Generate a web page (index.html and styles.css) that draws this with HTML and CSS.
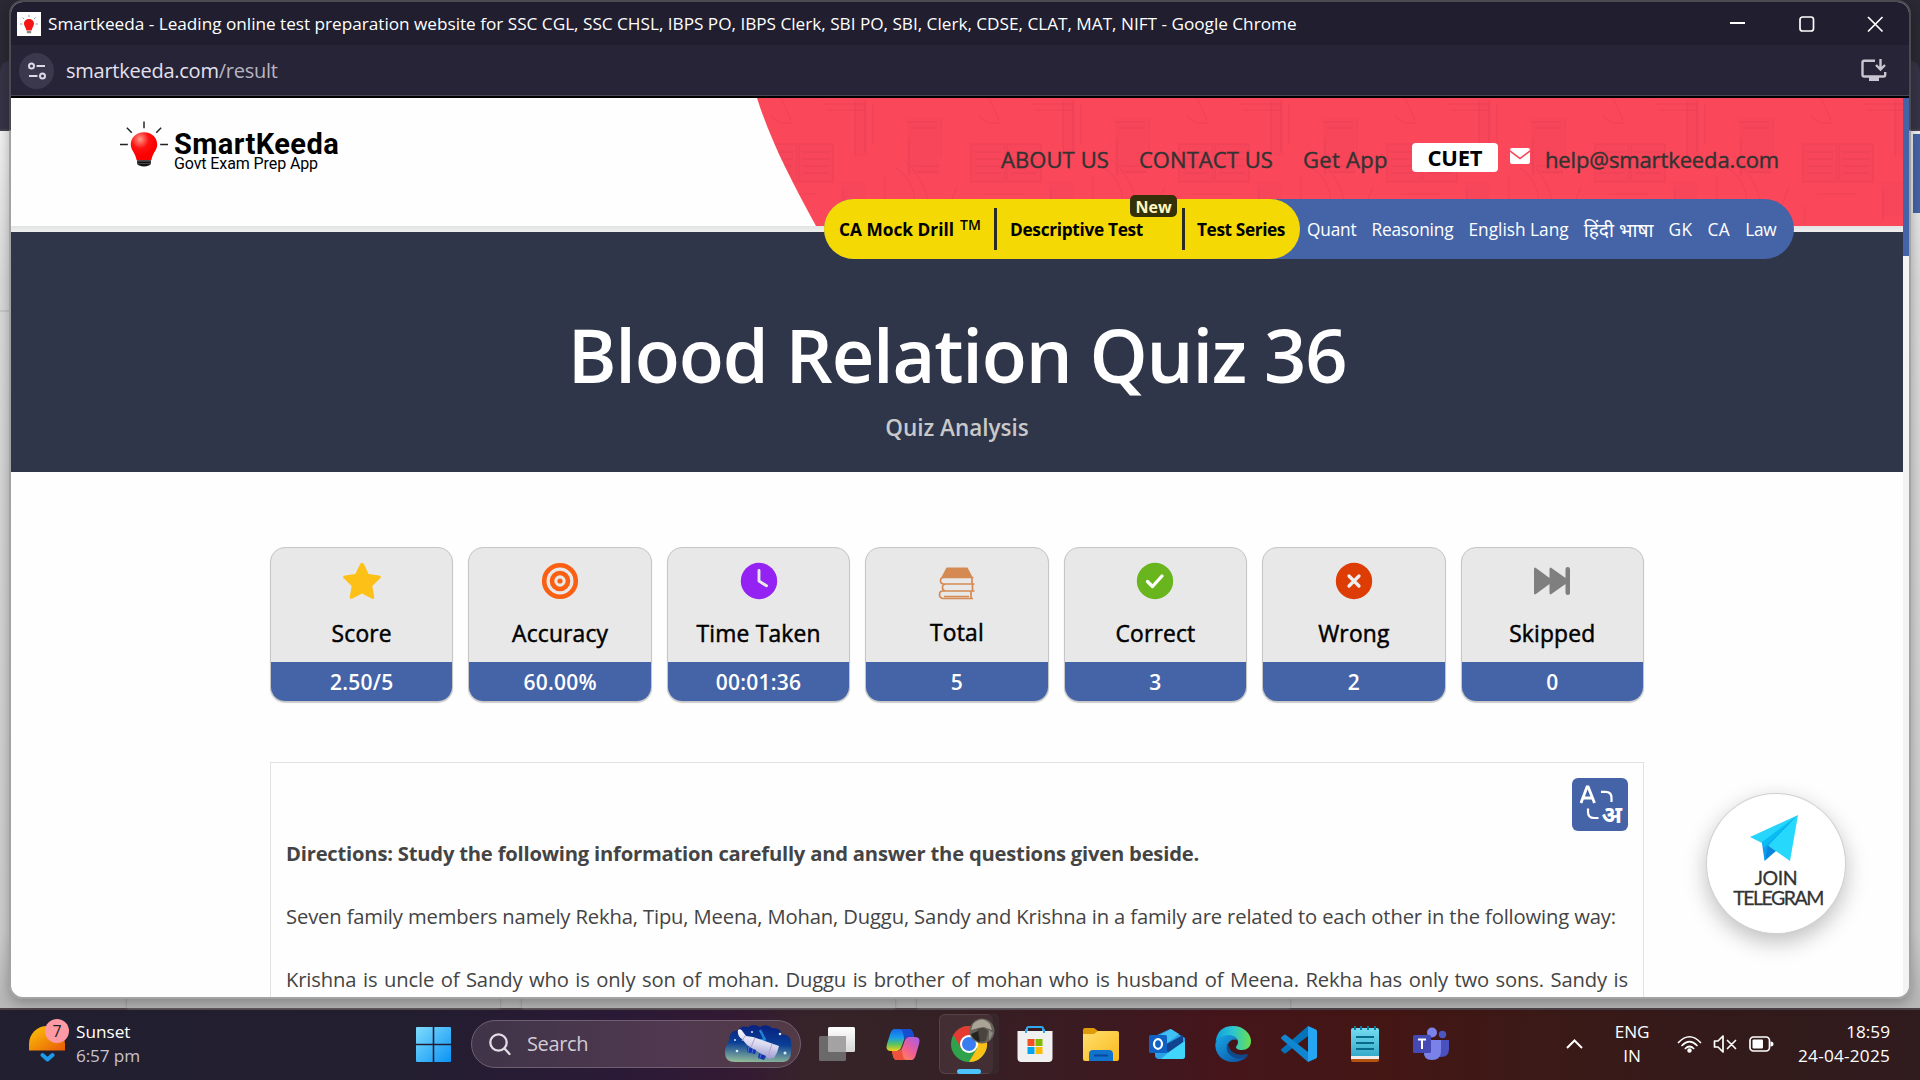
FILE: index.html
```html
<!DOCTYPE html>
<html lang="en">
<head>
<meta charset="utf-8">
<title>Smartkeeda</title>
<link rel="stylesheet" href="styles.css">
</head>
<body>
<div class="desktop">
  <div class="back-window">
    <div class="back-tabs"></div>
    <div class="back-toolbar"></div>
    <div class="back-page">
      <i class="back-rule"></i>
      <i class="back-thumb"></i>
      <div class="back-cards"><i></i><i></i><i></i></div>
    </div>
  </div>

  <main class="window">
    <div class="window-body">
      <div class="titlebar">
        <svg class="favicon" viewBox="0 0 24 24"><rect width="24" height="24" fill="#fff"/><path d="M12 7c3.200 0 5 2.200 5 4.700 0 2.300-1.800 3.600-2.500 6.800h-5C8.800 15.300 7 14 7 11.700 7 9.200 8.800 7 12 7z" fill="#f51414"/><path d="M9.800 19h4.400v2.200H9.800z" fill="#888"/><path d="M12 3v2M5.500 5.500L7 7M18.500 5.500L17 7M3 12h2.500M18.500 12H21" stroke="#999" stroke-width="1"/></svg>
        <span class="window-title">Smartkeeda - Leading online test preparation website for SSC CGL, SSC CHSL, IBPS PO, IBPS Clerk, SBI PO, SBI, Clerk, CDSE, CLAT, MAT, NIFT - Google Chrome</span>
        <svg class="controls" viewBox="0 0 154 20"><g fill="none" stroke="#fff"><path d="M0 9h15" stroke-width="2"/><rect x="70" y="3" width="13.500" height="14" rx="2.500" stroke-width="1.700"/><path d="M138 3l14.500 14.500M152.500 3L138 17.500" stroke-width="1.700"/></g></svg>
      </div>
      <div class="toolbar">
        <span class="site-info"><svg viewBox="0 0 20 20"><g fill="none" stroke="#dcd8e6" stroke-width="2"><circle cx="4.500" cy="5" r="2.500"/><path d="M9.500 5H18M2 15h8.500"/><circle cx="15.500" cy="15" r="2.500"/></g></svg></span>
        <span class="url"><span class="host">smartkeeda.com</span><span class="path">/result</span></span>
        <svg class="install" viewBox="0 0 26 23"><g fill="none" stroke="#c9c6d2" stroke-width="2.400"><path d="M14 1.700H3.200Q1.500 1.700 1.500 3.500v12.300q0 1.700 1.700 1.700h19.300q1.700 0 1.700-1.700V13"/><path d="M19.500 0v10M15 6l4.500 4.600L24 6"/></g><path d="M8 18h10v4H8z" fill="#c9c6d2"/></svg>
      </div>
      <div class="view">
        <div class="page">
          <header class="header">
            <svg class="banner" viewBox="0 0 1146 128" preserveAspectRatio="none">
              <defs>
                <pattern id="books" width="208" height="128" patternUnits="userSpaceOnUse">
                  <g fill="none" stroke="#e23a50" stroke-opacity=".32" stroke-width="1.500">
                    <path d="M6 46h34v38H6zM42 46h34v38H42zM10 54h26M10 61h26M10 68h26M10 75h26M46 54h26M46 61h26M46 68h26M46 75h26"/>
                    <path d="M98 2v56M108 2v52M116 6v40M128 78v30M138 70q16 8 20 32M146 62q18 12 26 44"/>
                    <path d="M66 6h42M70 12h38M150 24h30M152 30h28M156 68h26M160 74h22M152 40v38M184 20v40M20 96h40M8 108v18M86 92v30M200 88l-12 32"/>
                    <circle cx="118" cy="112" r="9"/><path d="M24 0l10 22M14 18q8 10 22 6"/>
                  </g>
                  <g fill="#e23a50" fill-opacity=".12"><path d="M6 46h34v38H6zM42 46h34v38H42zM150 20h32v56h-32zM98 2h12v56H98zM84 84h24v34H84z"/></g>
                </pattern>
              </defs>
              <path d="M0 0H1146V128H59C35 84 14 44 0 0z" fill="#fb475a"/>
              <path d="M0 0H1146V128H59C35 84 14 44 0 0z" fill="url(#books)"/>
            </svg>
            <div class="logo">
              <svg viewBox="0 0 50 47"><defs><radialGradient id="bulb" cx=".35" cy=".25" r=".6"><stop offset="0" stop-color="#ff9a8a"/><stop offset=".55" stop-color="#fe1212"/><stop offset="1" stop-color="#fb0000"/></radialGradient></defs><path d="M24.500 11c8.500 0 13.500 6 13.500 12.500 0 6-4.500 8-6 16H17c-1.500-8-6-10-6-16C11 17 16 11 24.500 11z" fill="url(#bulb)"/><path d="M17.500 39.500h14v4q-2 2.500-7 2.500t-7-2.500z" fill="#111"/><path d="M17.500 40.500h14M17.500 43h14" stroke="#777" stroke-width=".6"/><path d="M24.500 0v7M7 6.500l5 5M42 6.500l-5 5M0 23.500h8M41 23.500h8" stroke="#222" stroke-width="1.500"/></svg>
              <div class="logo-text"><b>SmartKeeda</b><span>Govt Exam Prep App</span></div>
            </div>
            <nav class="topnav">
              <a class="t-about">ABOUT US</a><a class="t-contact">CONTACT US</a><a class="t-app">Get App</a>
              <a class="cuet"><span>CUET</span></a>
              <svg class="mail" viewBox="0 0 20 16"><path d="M2 0h16q2 0 2 2L10 9.500 0 2Q0 0 2 0zM0 4l10 7.500L20 4v10q0 2-2 2H2q-2 0-2-2z" fill="#fff"/></svg>
              <a class="t-help">help@smartkeeda.com</a>
            </nav>
            <nav class="subjects">
              <div class="featured">
                <a class="f1"><span>CA Mock Drill</span> <sup>TM</sup></a>
                <a class="f2"><span>Descriptive Test</span><em>New</em></a>
                <a class="f3"><span>Test Series</span></a>
              </div>
              <div class="topics">
              <a class="s1">Quant</a><a class="s2">Reasoning</a><a class="s3">English Lang</a><a class="s4">हिंदी भाषा</a><a class="s5">GK</a><a class="s6">CA</a><a class="s7">Law</a>
              </div>
            </nav>
          </header>

          <section class="hero">
            <h1><span>Blood Relation Quiz 36</span></h1>
            <p><span>Quiz Analysis</span></p>
          </section>

          <section class="stats">
            <div class="stat"><svg viewBox="0 0 38 38"><path d="M19 .8q1.300 0 2 1.500l4.600 9.800 10.500 1.500q3 .6.900 2.900l-7.700 7.600 1.900 10.700q.3 3-2.500 1.800L19 31.500l-9.700 5.100q-2.800 1.200-2.500-1.800l1.900-10.700L1 16.500q-2.100-2.300.9-2.900l10.500-1.500L17 2.300Q17.700.8 19 .8z" fill="#fdc016"/></svg><h3><span>Score</span></h3><strong><span>2.50/5</span></strong></div>
            <div class="stat"><svg viewBox="0 0 38 38"><g fill="none" stroke="#fb5f12"><circle cx="19" cy="19" r="15.800" stroke-width="4.600"/><circle cx="19" cy="19" r="8" stroke-width="4.600"/></g><circle cx="19" cy="19" r="2.600" fill="#fb5f12"/></svg><h3><span>Accuracy</span></h3><strong><span>60.00%</span></strong></div>
            <div class="stat"><svg viewBox="0 0 38 38"><circle cx="19" cy="19" r="18.200" fill="#9322f3"/><path d="M19 8.500V19l7.500 4.800" fill="none" stroke="#e8e8e8" stroke-width="2.900" stroke-linecap="round" stroke-linejoin="round"/></svg><h3><span>Time Taken</span></h3><strong><span>00:01:36</span></strong></div>
            <div class="stat total"><svg viewBox="0 0 38 38"><path d="M8.500 5.500h21l5 9.500v1H3z" fill="#d58a54"/><g fill="none" stroke="#d58a54" stroke-width="1.700"><path d="M35.500 15.500H6q-3.500 0-3.500 3.200T6 22h30M34 15.500V22M36.500 22H8q-3.500 0-3.500 3.500T8 29h28.500M34.500 22v7M36 29H5q-3.500 0-3.500 3.500T5 36.500h30M33 29v7.500M6 34.500h25"/></g></svg><h3><span>Total</span></h3><strong><span>5</span></strong></div>
            <div class="stat"><svg viewBox="0 0 38 38"><circle cx="19" cy="19" r="18.200" fill="#69b51d"/><path d="M11.500 19.500l5 5L26 14" fill="none" stroke="#fff" stroke-width="3.300" stroke-linecap="round" stroke-linejoin="round"/></svg><h3><span>Correct</span></h3><strong><span>3</span></strong></div>
            <div class="stat"><svg viewBox="0 0 38 38"><circle cx="19" cy="19" r="18.200" fill="#de3c05"/><path d="M14 14l10 10M24 14L14 24" fill="none" stroke="#eee" stroke-width="3.300" stroke-linecap="round"/></svg><h3><span>Wrong</span></h3><strong><span>2</span></strong></div>
            <div class="stat"><svg viewBox="0 0 38 38"><path d="M1 7.500q0-3 2.300-1.300L16.500 16V7.500q0-3 2.300-1.300L32.500 16V7q0-2 2.300-2T37 7v24q0 2-2.200 2t-2.300-2v-9L18.800 31.800q-2.300 1.700-2.300-1.300V22L3.300 31.800Q1 33.500 1 30.500z" fill="#7f7f7f"/></svg><h3><span>Skipped</span></h3><strong><span>0</span></strong></div>
          </section>

          <section class="question">
            <button class="translate"><svg viewBox="0 0 56 53"><g fill="none" stroke="#fff" stroke-width="2.800"><path d="M9 25L15 9h1.200L22.500 25M11 20h9.500"/><path d="M29 13.800h4.500q6 0 6 6V24M16 30.500V34q0 6 6 6h4.500" stroke-width="2.200"/></g><text x="29.500" y="45" class="glyph">अ</text></svg></button>
            <p class="q1"><b>Directions: Study the following information carefully and answer the questions given beside.</b></p>
            <p class="q2"><span>Seven family members namely Rekha, Tipu, Meena, Mohan, Duggu, Sandy and Krishna in a family are related to each other in the following way:</span></p>
            <p class="q3">Krishna is uncle of Sandy who is only son of mohan. Duggu is brother of mohan who is husband of Meena. Rekha has only two sons. Sandy is</p>
          </section>

          <a class="telegram">
            <svg viewBox="0 0 48 46"><path d="M48 0L0 22l12 6z" fill="#26d5fb"/><path d="M48 0L12 28l2.500 18L19 31z" fill="#0a9df0"/><path d="M48 0L18 30.500 40 46z" fill="#26d9fc"/><path d="M18 30.500L14.500 46 26 36z" fill="#0587e0"/><path d="M48 0L12 27l2 6z" fill="#08bdf3"/></svg>
            <span>JOIN</span><span class="tg">TELEGRAM</span>
          </a>
        </div>
        <div class="scrollbar"><i></i></div>
      </div>
    </div>
  </main>

  <footer class="taskbar">
    <div class="weather">
      <div class="sun"><svg viewBox="0 0 36 36"><defs><linearGradient id="sun" x1="0" y1="0" x2="1" y2="1"><stop offset="0" stop-color="#fdc70a"/><stop offset="1" stop-color="#e85a05"/></linearGradient></defs><path d="M0 24.500V18a18 18 0 0 1 36 0v6.500z" fill="url(#sun)"/><path d="M13.500 29l5 4.500 5-4.500" fill="none" stroke="#1c9bea" stroke-width="4" stroke-linecap="round" stroke-linejoin="round"/></svg><b class="badge">7</b></div>
      <div class="wx"><span>Sunset</span><span class="dim">6:57 pm</span></div>
    </div>
    <svg class="start" viewBox="0 0 35 35"><defs><linearGradient id="win" x1="0" y1="0" x2="1" y2="1"><stop offset="0" stop-color="#7fdcfd"/><stop offset="1" stop-color="#0a93f5"/></linearGradient></defs><path d="M1 0h15.700v16.700H0V1q0-1 1-1zM18.300 0H34q1 0 1 1v15.700H18.300zM0 18.300h16.700V35H1q-1 0-1-1zM18.300 18.300H35V34q0 1-1 1H18.300z" fill="url(#win)"/></svg>
    <div class="search">
      <svg class="lens" viewBox="0 0 22 23"><g fill="none" stroke="#e2dde5" stroke-width="2.300" stroke-linecap="round"><circle cx="9.500" cy="9.500" r="8.200"/><path d="M15.500 15.500l5 5.500"/></g></svg>
      <span>Search</span>
      <svg class="art" viewBox="0 0 67 38"><defs><linearGradient id="sky" x1=".5" y1="0" x2=".4" y2="1"><stop offset="0" stop-color="#082080"/><stop offset=".5" stop-color="#0a3f96"/><stop offset="1" stop-color="#8fb99a"/></linearGradient><linearGradient id="tube" x1=".6" y1="0" x2=".4" y2="1"><stop offset="0" stop-color="#fff"/><stop offset=".5" stop-color="#d9d8ef"/><stop offset="1" stop-color="#8f90cc"/></linearGradient></defs><path d="M4 15q0-9 9-10Q16 0 23 2q6-4 12 0 7-4 12 1 8-1 10 6 9 1 9 8 1 4 0 7 1 13-8 13H10Q0 37 0 28q0-5 2-8z" fill="url(#sky)"/><path d="M35 5l5 10M33 16l8-2" stroke="#1b83d8" stroke-width="2.500"/><path d="M13 5q3-2 5 2l3 4 7 1 26 9q-1 6-5 12l-5 1-22-14-5-6q-5-3-4-9z" fill="url(#tube)"/><path d="M20 11l-3 5M47 19l-4 12M30 13l-4 9" stroke="#b59fcf"/><path d="M22 22l9 3-1 4-8-2zM34 28l7 3-2 4-6-2z" fill="#1433b0"/><path d="M24 22l-1 5M28 24l-1 4M36 29l-1 4" stroke="#6d8fe0" stroke-width=".7"/><g fill="#d5ecff"><circle cx="10" cy="15" r="1"/><circle cx="55" cy="9" r="1.300"/><circle cx="60" cy="28" r="1.500"/><circle cx="12" cy="26" r="1.300"/><circle cx="27" cy="7" r="1"/></g></svg>
    </div>
    <div class="apps">
      <svg viewBox="0 0 36 36"><defs><linearGradient id="tv" x1="0" y1="0" x2="0" y2="1"><stop offset="0" stop-color="#fff"/><stop offset="1" stop-color="#d6d6d6"/></linearGradient></defs><rect x="9" y="1" width="27" height="25" rx="1.500" fill="url(#tv)"/><rect x="0" y="10" width="27" height="25" rx="1.500" fill="#6b6969"/><path d="M9 10h18v16H10.500Q9 26 9 24.500z" fill="#a4a2a2"/></svg>
      <svg viewBox="0 0 36 36"><defs><linearGradient id="cpa" x1="0" y1="0" x2="0" y2="1"><stop offset="0" stop-color="#1668ea"/><stop offset=".4" stop-color="#1a9ee8"/><stop offset=".7" stop-color="#5cc45c"/><stop offset="1" stop-color="#f8cf1c"/></linearGradient><linearGradient id="cpb" x1="1" y1="0" x2="0" y2="1"><stop offset="0" stop-color="#a45bf0"/><stop offset=".5" stop-color="#f2608e"/><stop offset="1" stop-color="#fb9a3a"/></linearGradient></defs><path d="M9.500 3H24q3 0 4 4l1 4h-6q-3 0-4 3l-3 8q-1.500 3-4 3H5.500Q0 25 2 18L5.500 7Q7 3 9.500 3z" fill="url(#cpa)"/><path d="M14 3h10q3 0 4 4l1 4h-6q-2.500 0-3.500 2.500L18 7q-1-4-4-4z" fill="#174bd0"/><path d="M26.500 34H12q-3 0-4-4l-1-5h6q3 0 4-3l3-8q1.500-3 4-3h6.500q5.500 0 3.500 7l-3.500 12q-1.500 4-4 4z" fill="url(#cpb)"/><path d="M22 34H12q-3 0-4-4l-1-5h6q2.500 0 3.500-2.500L18 30q1 4 4 4z" fill="#f0513e"/></svg>
      <span class="active"><svg viewBox="0 0 36 36"><circle cx="18" cy="18" r="18" fill="#31a24c"/><path d="M18 18L2.400 9A18 18 0 0 1 33.600 9z" fill="#e53a32"/><path d="M18 9h15.600A18 18 0 0 1 18 36l8-13.500z" fill="#fbc116"/><path d="M2.400 9l7.800 13.500L14 10 33.600 9H18z" fill="#e53a32"/><circle cx="18" cy="18" r="9" fill="#fff"/><circle cx="18" cy="18" r="7" fill="#3a7df0"/></svg><svg class="avatar" viewBox="0 0 26 26"><circle cx="13" cy="13" r="12.500" fill="#67635a"/><path d="M4 6q9-9 17 0l2 6-8-3-6 1-7 2z" fill="#aaa497"/><path d="M8 12q6-5 11 1l-2 9q-5 4-8-1z" fill="#4a443e"/><path d="M2 16l7-3 2 11q-7-2-9-8z" fill="#24241f"/><path d="M20 12l4 3-4 8z" fill="#8b8e85"/></svg></span>
      <svg viewBox="0 0 36 36"><path d="M10 9V2.500Q10 1 11.500 1h13Q26 1 26 2.500V9" fill="none" stroke="#31a8ec" stroke-width="2"/><path d="M.5 5h35v27q0 4-4 4h-27q-4 0-4-4z" fill="#f1f0f0"/><path d="M9 3v4M27 3v4" stroke="#31a8ec" stroke-width="2"/><path d="M10.500 13H17.500V20H10.500z" fill="#f25022"/><path d="M18.500 13h7v7h-7z" fill="#7fba00"/><path d="M10.500 21h7v7h-7z" fill="#00a4ef"/><path d="M18.500 21h7v7h-7z" fill="#ffb900"/></svg>
      <svg viewBox="0 0 36 36"><defs><linearGradient id="fold" x1="0" y1="0" x2="1" y2="1"><stop offset="0" stop-color="#ffdf6e"/><stop offset="1" stop-color="#fbb91d"/></linearGradient></defs><path d="M0 4q0-2 2-2h9l4 3v6H0z" fill="#df9b08"/><path d="M0 8h11l4-3h19q2 0 2 2v26q0 2-2 2H2q-2 0-2-2z" fill="url(#fold)"/><path d="M6 35V28q0-4 4-4h16q4 0 4 4v7z" fill="#1273cf"/><path d="M11 29.500h14" stroke="#064b9a" stroke-width="2"/></svg>
      <svg viewBox="0 0 36 36"><path d="M6 10L21 3l15 9v18q0 3-3 3H10q-4 0-4-4z" fill="#2b9fe8"/><path d="M10 10L22 3l8 5-16 12z" fill="#41c1f3"/><path d="M34 9v7L19 27l-5-7z" fill="#12438f"/><path d="M36 15v15q0 3-3 3H12l8-7z" fill="#40d5fa"/><rect x="0" y="9" width="18" height="18" rx="1.500" fill="#0f62c4"/><ellipse cx="9" cy="18" rx="4" ry="4.800" fill="none" stroke="#fff" stroke-width="2.200"/></svg>
      <svg viewBox="0 0 36 36"><defs><linearGradient id="edge" x1="0" y1=".3" x2="1" y2=".3"><stop offset="0" stop-color="#0fa0dc"/><stop offset=".5" stop-color="#2cc6d0"/><stop offset="1" stop-color="#6be04a"/></linearGradient><linearGradient id="edge2" x1="0" y1="0" x2="1" y2="1"><stop offset="0" stop-color="#18a7e8"/><stop offset="1" stop-color="#0b4c9c"/></linearGradient></defs><path d="M.5 17Q2 0 18 0c11 0 18 8 18 15 0 6-4 9-9 9-5 0-6-2-6-3 0-1 2-2 2-5 0-3-3-6-8-6C8 10 1.500 13 .5 17z" fill="url(#edge)"/><path d="M.3 18Q2 10 13 9q7 0 9 5-6-2-9 4c-2 7 5 15 14 14 3 0 5-2 6-2Q27 36 18 36C7 36 0 28 .3 18z" fill="url(#edge2)"/><path d="M13 17c-4 7 1 15 12 16 3 0 7-3 8-4 0 0 0-1-1-1-12 3-19-4-19-11z" fill="#114a8b"/></svg>
      <svg viewBox="0 0 36 36"><path d="M27 0l8 3.500q1 .5 1 2v25q0 1.500-1 2L27 36z" fill="#25a5f2"/><path d="M27 0v10L5 27q-1 1-2 0l-2.500-2q-1-1 0-2z" fill="#0473ba"/><path d="M27 36V26L5 9Q4 8 3 9L.5 11q-1 1 0 2z" fill="#1186d0"/></svg>
      <svg viewBox="0 0 36 36"><defs><linearGradient id="np" x1="0" y1="0" x2="0" y2="1"><stop offset="0" stop-color="#75dcf0"/><stop offset="1" stop-color="#35abca"/></linearGradient></defs><path d="M4 31h28v3q0 2-2 2H6q-2 0-2-2z" fill="#b5540f"/><path d="M4 29h28v4H4z" fill="#eee"/><path d="M6 2h24q2 0 2 2v26H4V4q0-2 2-2z" fill="url(#np)"/><path d="M9 11h18M9 17h18M9 23h18" stroke="#07698c" stroke-width="2"/><path d="M8 0v4M14 0v4M21 0v4M28 0v4" stroke="#0b7a9c" stroke-width="2"/></svg>
      <svg viewBox="0 0 36 36"><circle cx="19" cy="6.500" r="5" fill="#7b83eb"/><circle cx="29.500" cy="8.500" r="3.700" fill="#4c55c4"/><path d="M24 14h12v9q0 8-8 8h-4z" fill="#4a50bd"/><path d="M11 14h17v11q0 9-9 9t-8-9z" fill="#7a82ea"/><rect x="0" y="9" width="18" height="18" rx="1.500" fill="#4549b4"/><path d="M5 13.500h8M9 13.500V23" stroke="#fff" stroke-width="2"/></svg>
    </div>
    <div class="tray">
      <svg class="chev" viewBox="0 0 17 10"><path d="M1 9l7.500-7.500L16 9" fill="none" stroke="#fff" stroke-width="2"/></svg>
      <div class="lang"><span>ENG</span><span>IN</span></div>
      <svg class="status" viewBox="0 0 98 20"><g fill="none" stroke="#fff" stroke-width="1.700" stroke-linecap="round"><path d="M1.500 8.500Q12.500-3 23.500 8.500M5 11.500q7.500-7.500 15 0M8.300 14.500q4.200-4 8.400 0"/><path d="M37.500 7h3.500L46 2v16l-5-5h-3.500zM50.500 6.500l8 8M58.500 6.500l-8 8" stroke-linejoin="round"/><rect x="73" y="3" width="19.500" height="14" rx="3.500"/></g><circle cx="12.500" cy="16.500" r="2.200" fill="#fff"/><rect x="75.500" y="5.500" width="10.500" height="9" rx="1" fill="#fff"/><path d="M93.500 7.500q3 0 3 2.500t-3 2.500z" fill="#fff"/></svg>
      <div class="clock"><span>18:59</span><span class="date">24-04-2025</span></div>
    </div>
  </footer>
</div>
</body>
</html>
```
FILE: styles.css
```css
* { box-sizing: border-box; }
body { margin: 0; width: 1920px; height: 1080px; overflow: hidden; font-family: "Open Sans", "Noto Sans", sans-serif; }
svg { display: block; flex: none; }
h1, h3, p { margin: 0; }
.desktop { position: relative; width: 1920px; height: 1080px; display: flex; flex-direction: column; }

.back-window { flex: 1; display: flex; flex-direction: column; background: #2b2933; }
.back-tabs { height: 60px; }
.back-toolbar { height: 71px; background: #373447; border-radius: 12px 12px 0 0; border-bottom: 2px solid #45424f; }
.back-page { flex: 1; position: relative; background: linear-gradient(#f4f4f4, #dcdcdc 150px, #cfcfcf 800px, #b9b9b9 870px); }
.back-rule { position: absolute; left: 0; top: 179px; width: 9px; height: 2px; background: #c9c9c9; }
.back-thumb { position: absolute; right: 0; top: 3px; width: 7px; height: 79px; background: #4564a8; }
.back-cards { position: absolute; left: 127px; right: 0; bottom: 0; height: 10px; display: flex; gap: 22px; }
.back-cards i { width: 373px; background: #b8b8b8; box-shadow: 0 0 3px #888; }

.window { position: absolute; left: 9px; top: 0; width: 1902px; height: 999px; padding: 2px; border-radius: 14px; background: linear-gradient(#4b4a50 130px, #a3a3a3 131px); box-shadow: 0 4px 14px rgba(0,0,0,.3); }
.window-body { height: 995px; border-radius: 12px; overflow: hidden; background: #fefefe; display: flex; flex-direction: column; }
.titlebar { height: 43px; background: #201e2f; display: flex; align-items: center; padding-left: 6px; color: #fff; }
.favicon { width: 24px; height: 24px; margin-right: 7px; }
.window-title { font-size: 17.2px; letter-spacing: -.014px; white-space: nowrap; }
.controls { width: 154px; height: 20px; margin-left: auto; margin-right: 25px; }
.toolbar { height: 53px; background: #272437; border-bottom: 2px solid #000; box-shadow: inset 0 -1px #4a4754; display: flex; align-items: center; padding-left: 8px; }
.site-info { width: 35px; height: 36px; border-radius: 50%; background: #3b384d; display: grid; place-items: center; margin-right: 12px; }
.site-info svg { width: 20px; height: 20px; }
.url { font-size: 20px; letter-spacing: -.25px; color: #e4e0ee; white-space: nowrap; }
.path { color: #b7b4c1; }
.install { width: 26px; height: 23px; margin-left: auto; margin-right: 22px; }

.view { flex: 1; min-height: 0; display: flex; }
.page { position: relative; width: 1892px; overflow: hidden; }
.scrollbar { width: 6px; background: #f3f3f3; }
.scrollbar i { display: block; height: 158px; background: #4564a8; }

.header { position: relative; height: 134px; background: linear-gradient(#fefefe 128px, #e2e3e4 128px, #efefef 134px); display: flex; }
.banner { position: absolute; left: 746px; top: 0; width: 1146px; height: 128px; }
.logo { display: flex; margin: 23px 0 0 109px; height: 54px; gap: 5px; }
.logo svg { width: 49px; height: 47px; }
.logo-text { display: flex; flex-direction: column; font-family: Roboto, sans-serif; color: #000; padding-top: 6px; }
.logo-text b { font-size: 29px; line-height: 34px; letter-spacing: .42px; }
.logo-text span { font-size: 16px; line-height: 20px; margin-top: -7px; letter-spacing: -.1px; white-space: nowrap; align-self: flex-start; }
.topnav { position: relative; display: flex; align-items: center; height: 62px; margin: 30px 124px 0 auto; font-size: 22px; line-height: 30px; color: #333; -webkit-text-stroke: .4px; white-space: nowrap; }
.t-about { letter-spacing: .1px; }
.t-contact, .t-app { margin-left: 30px; }
.t-contact { letter-spacing: .06px; }
.t-app { letter-spacing: .32px; }
.t-help { letter-spacing: -.12px; }
.cuet { margin: -4px 0 0 24px; width: 86px; height: 29px; border-radius: 4px; background: #fff; color: #000; font-weight: 700; -webkit-text-stroke: 0; letter-spacing: -.18px; text-align: center; line-height: 29px; }
.mail { width: 20px; height: 16px; margin: -7px 15px 0 12px; }

.subjects { position: absolute; left: 813px; top: 101px; width: 970px; height: 60px; border-radius: 30px; background: #4564a8; display: flex; white-space: nowrap; font-size: 17.3px; line-height: 62px; }
.featured { width: 476px; border-radius: 30px; background: #f5d905; display: flex; align-items: center; color: #000; font-weight: 700; padding-left: 15px; }
.featured a { display: flex; height: 42px; align-items: center; }
.featured span { margin-top: 1px; }
.featured sup { font-size: 14px; line-height: 14px; font-weight: 600; margin: -8px 0 0 6px; }
.f1 { width: 158px; border-right: 3px solid #2b2a1e; }
.f2 { position: relative; width: 188px; padding-left: 13px; border-right: 3px solid #2b2a1e; letter-spacing: -.32px; }
.f3 { padding-left: 12px; letter-spacing: -.4px; }
.f2 em { position: absolute; left: 133px; top: -13px; width: 47px; height: 22px; border-radius: 5px; background: #353007; color: #fff6c0; font-size: 16px; letter-spacing: 0; font-style: normal; line-height: 24px; text-align: center; }
.topics { display: flex; padding-left: 7px; color: #fff; gap: 15px; }
.s1 { letter-spacing: -.2px; }
.s2 { letter-spacing: -.17px; }
.s4 { font-size: 19.2px; }
.s5 { letter-spacing: .4px; }
.s6 { letter-spacing: .5px; }
.s7 { letter-spacing: -.3px; }

.hero { height: 240px; background: #30364a; text-align: center; padding-top: 83px; }
.hero h1 { font-size: 74px; font-weight: 600; line-height: 80px; letter-spacing: -1.2px; color: #fff; white-space: nowrap; }
.hero p { margin-top: 17px; font-size: 22.5px; font-weight: 600; line-height: 32px; color: #c9c9c9; }

.stats { display: grid; grid-template-columns: repeat(7, 1fr); gap: 15px; margin: 75px 259px 0; }
.stat { height: 155px; border: 1px solid #c6c6c6; border-radius: 15px; background: #e8e8e8; overflow: hidden; display: flex; flex-direction: column; align-items: center; padding-top: 14px; box-shadow: 0 1px 1px #ccc; }
.stat svg { width: 38px; height: 38px; }
.stat h3 { font-size: 22.800px; font-weight: 400; -webkit-text-stroke: .5px; letter-spacing: .2px; line-height: 32px; margin-top: 18px; color: #000; }
.total h3 { margin-top: 17px; margin-bottom: 1px; }
.stat strong { align-self: stretch; margin-top: 12px; height: 40px; background: #4564a8; color: #fff; font-size: 21px; font-weight: 600; letter-spacing: .25px; line-height: 40px; text-align: center; }

.question { margin: 60px 259px 0; height: 400px; border: 1px solid #e2e2e2; padding: 15px; display: flex; flex-direction: column; font-size: 20.200px; line-height: 32px; color: #444; white-space: nowrap; }
.translate { align-self: flex-end; width: 56px; height: 53px; border: 0; padding: 0; border-radius: 6px; background: #4564a8; margin-bottom: 6px; }
.glyph { font: 700 24px "Noto Sans Devanagari", "Noto Sans", sans-serif; fill: #fff; }
.question p { margin-bottom: 31px; }
.q1 { letter-spacing: -.206px; }
.q2, .q3 { letter-spacing: -.137px; }
.q3 { text-align-last: justify; }

.telegram { position: absolute; left: 1695px; top: 695px; width: 140px; height: 141px; border-radius: 50%; background: #fff; border: 1px solid #d0d0d0; box-shadow: 0 8px 22px rgba(0,0,0,.25); display: flex; flex-direction: column; align-items: center; padding-top: 21px; font-family: Lato, sans-serif; font-size: 19.5px; line-height: 20px; color: #333; -webkit-text-stroke: .3px; letter-spacing: -.4px; }
.telegram svg { width: 48px; height: 46px; margin-bottom: 7px; margin-left: -4px; }
.tg { letter-spacing: -1.5px; margin-left: 4px; }

.taskbar { height: 72px; border-top: 2px solid #4d4248; background: linear-gradient(90deg, #211f30, #231e30 400px, #2b1a37 620px, #341a33 740px, #37242a 810px, #352226 920px, #3b1b22 1080px, #45151b 1220px, #441614 1380px, #3b1a17 1550px, #341a1a 1700px, #301b1e); display: flex; align-items: center; padding-bottom: 2px; color: #fff; font-size: 17.200px; line-height: 24px; white-space: nowrap; }
.weather { width: 416px; padding-left: 29px; display: flex; gap: 12px; align-items: center; }
.sun { position: relative; width: 36px; height: 36px; }
.badge { position: absolute; left: 16px; top: -7px; width: 24px; height: 24px; border-radius: 50%; background: #ff9aa4; color: #222; font-size: 16px; font-weight: 400; text-align: center; }
.wx, .lang, .clock { display: flex; flex-direction: column; }
.wx { margin-left: -1px; }
.wx span, .lang span, .clock span, .logo-text b, .telegram span { width: max-content; }
.dim { color: #c8c3cd; letter-spacing: -.12px; }
.start { width: 35px; height: 35px; }
.search { margin: 0 18px 0 20px; width: 330px; height: 48px; border-radius: 24px; border: 1px solid #70606f; background: linear-gradient(90deg, #3f3449, #503850 60%, #523b45); display: flex; align-items: center; padding: 0 8px 0 17px; font-size: 20px; letter-spacing: -.35px; color: #d2ccd4; }
.lens { width: 22px; height: 23px; margin-right: 16px; }
.art { width: 67px; height: 38px; margin-left: auto; }
.apps { display: flex; gap: 30px; align-items: center; }
.apps > svg, .active > svg:first-child { width: 36px; height: 36px; }
.active { position: relative; width: 60px; height: 60px; margin: 0 -12px; padding: 12px; border-radius: 6px; background: #422e33; box-shadow: inset -6px 0 #37262a, inset 0 0 0 1px #554248; }
.active::after { content: ""; position: absolute; left: 18px; bottom: 0; width: 24px; height: 5px; border-radius: 3px; background: #4cc2ff; }
.avatar { position: absolute; left: 30px; top: 4px; width: 26px; height: 26px; }
.tray { margin-left: auto; padding-right: 30px; display: flex; align-items: center; }
.chev { width: 17px; height: 10px; margin-right: 32px; }
.lang { align-items: center; width: 34px; margin-right: 28px; letter-spacing: -.2px; }
.status { width: 98px; height: 20px; margin-right: 22px; }
.clock { align-items: flex-end; width: 93px; }
.date { letter-spacing: .23px; }
```
